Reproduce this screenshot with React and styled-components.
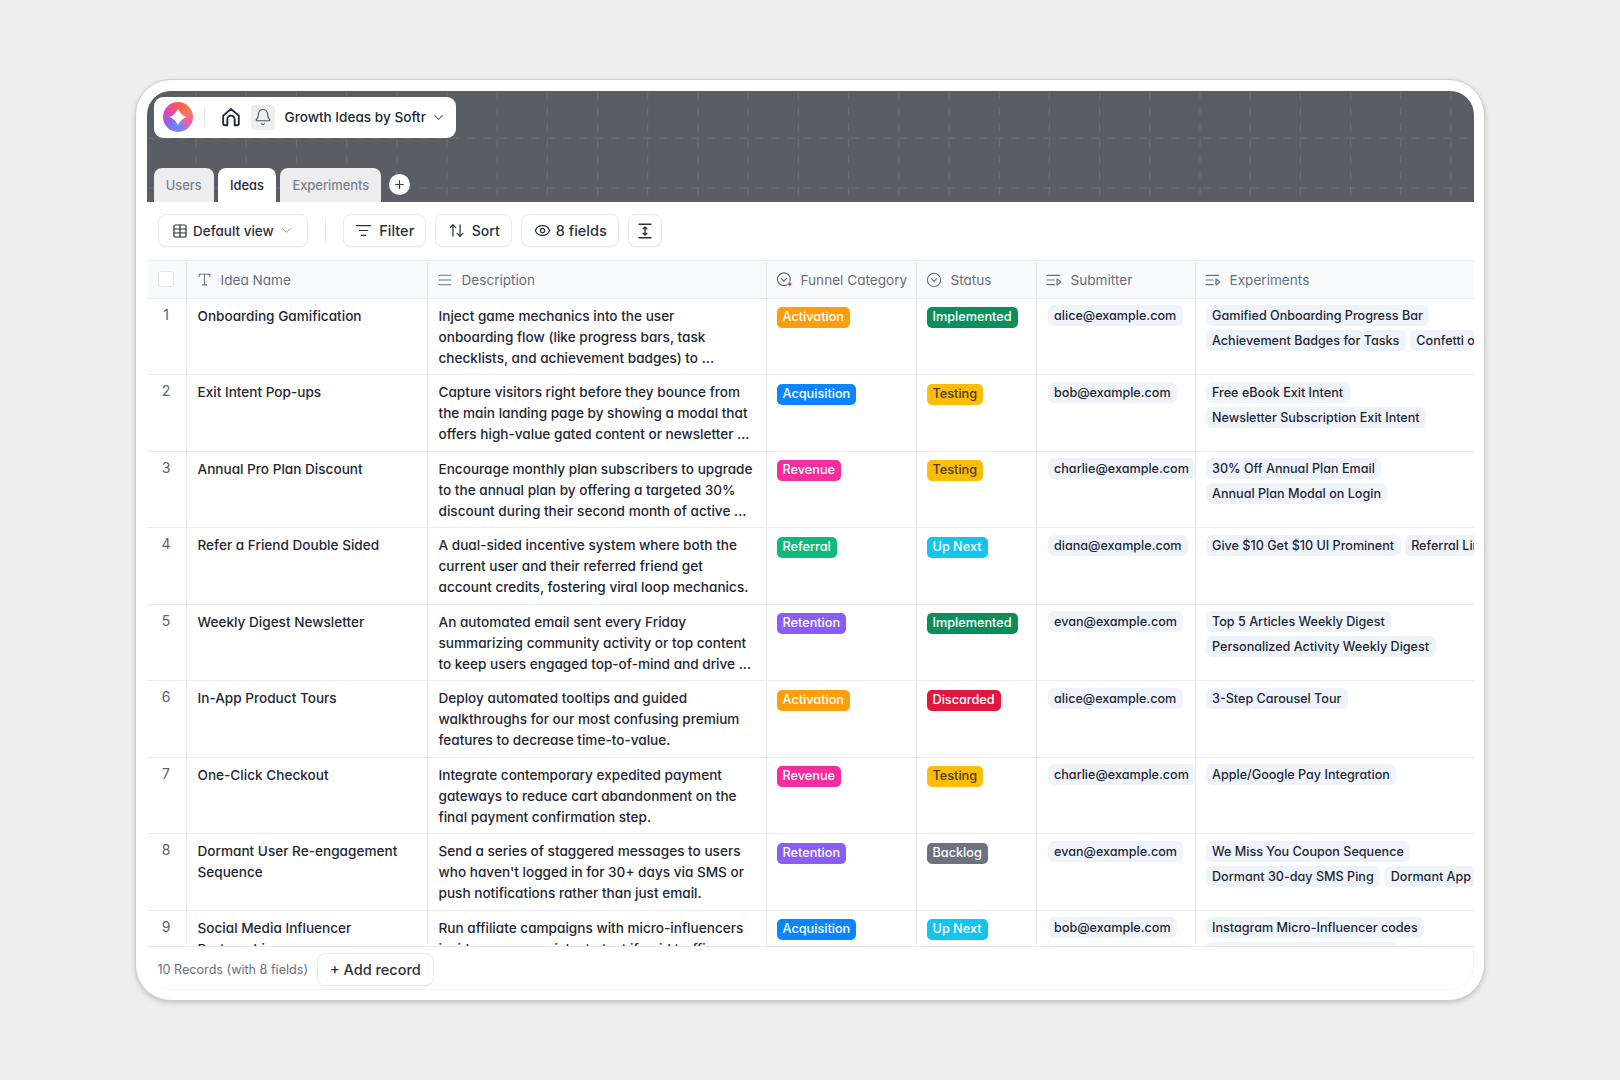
import React from "react";
import styled, { createGlobalStyle } from "styled-components";
import {
  ArrowUpDown,
  AlignJustify,
  Bell,
  ChevronDown,
  CircleChevronDown,
  Eye,
  ListFilter,
  Plus,
  Table,
} from "lucide-react";

const COLS = [40, 241, 339, 150, 120, 159, 278];

const TAG_COLORS = {
  Activation: "#ff9d0a",
  Acquisition: "#0a84ff",
  Revenue: "#f52d9e",
  Referral: "#0fb97c",
  Retention: "#8b5cf6",
  Implemented: "#0b8f5a",
  Testing: "#ffbd0a",
  "Up Next": "#14c4ee",
  Discarded: "#e0183f",
  Backlog: "#6b7280",
};

const records = [
  {
    name: ["Onboarding Gamification"],
    desc: [
      "Inject game mechanics into the user",
      "onboarding flow (like progress bars, task",
      "checklists, and achievement badges) to ...",
    ],
    funnel: "Activation",
    status: "Implemented",
    email: "alice@example.com",
    experiments: [
      ["Gamified Onboarding Progress Bar"],
      ["Achievement Badges for Tasks", "Confetti on Completion"],
    ],
  },
  {
    name: ["Exit Intent Pop-ups"],
    desc: [
      "Capture visitors right before they bounce from",
      "the main landing page by showing a modal that",
      "offers high-value gated content or newsletter ...",
    ],
    funnel: "Acquisition",
    status: "Testing",
    email: "bob@example.com",
    experiments: [["Free eBook Exit Intent"], ["Newsletter Subscription Exit Intent"]],
  },
  {
    name: ["Annual Pro Plan Discount"],
    desc: [
      "Encourage monthly plan subscribers to upgrade",
      "to the annual plan by offering a targeted 30%",
      "discount during their second month of active ...",
    ],
    funnel: "Revenue",
    status: "Testing",
    email: "charlie@example.com",
    experiments: [["30% Off Annual Plan Email"], ["Annual Plan Modal on Login"]],
  },
  {
    name: ["Refer a Friend Double Sided"],
    desc: [
      "A dual-sided incentive system where both the",
      "current user and their referred friend get",
      "account credits, fostering viral loop mechanics.",
    ],
    funnel: "Referral",
    status: "Up Next",
    email: "diana@example.com",
    experiments: [["Give $10 Get $10 UI Prominent", "Referral Link Share"]],
  },
  {
    name: ["Weekly Digest Newsletter"],
    desc: [
      "An automated email sent every Friday",
      "summarizing community activity or top content",
      "to keep users engaged top-of-mind and drive ...",
    ],
    funnel: "Retention",
    status: "Implemented",
    email: "evan@example.com",
    experiments: [["Top 5 Articles Weekly Digest"], ["Personalized Activity Weekly Digest"]],
  },
  {
    name: ["In-App Product Tours"],
    desc: [
      "Deploy automated tooltips and guided",
      "walkthroughs for our most confusing premium",
      "features to decrease time-to-value.",
    ],
    funnel: "Activation",
    status: "Discarded",
    email: "alice@example.com",
    experiments: [["3-Step Carousel Tour"]],
  },
  {
    name: ["One-Click Checkout"],
    desc: [
      "Integrate contemporary expedited payment",
      "gateways to reduce cart abandonment on the",
      "final payment confirmation step.",
    ],
    funnel: "Revenue",
    status: "Testing",
    email: "charlie@example.com",
    experiments: [["Apple/Google Pay Integration"]],
  },
  {
    name: ["Dormant User Re-engagement", "Sequence"],
    desc: [
      "Send a series of staggered messages to users",
      "who haven't logged in for 30+ days via SMS or",
      "push notifications rather than just email.",
    ],
    funnel: "Retention",
    status: "Backlog",
    email: "evan@example.com",
    experiments: [["We Miss You Coupon Sequence"], ["Dormant 30-day SMS Ping", "Dormant App Push"]],
  },
  {
    name: ["Social Media Influencer", "Partnerships"],
    desc: [
      "Run affiliate campaigns with micro-influencers",
      "inside your core niche to test if paid traffic",
      "converts better than our organic content.",
    ],
    funnel: "Acquisition",
    status: "Up Next",
    email: "bob@example.com",
    experiments: [["Instagram Micro-Influencer codes"], ["YouTube Creator Promo Code"]],
  },
];

const GlobalStyle = createGlobalStyle`
  html, body {
    margin: 0;
    padding: 0;
    background: #eeeeee;
  }
  body {
    font-family: Inter, "Noto Sans", sans-serif;
    font-feature-settings: "cv11" 1;
    color: #1f2733;
  }
`;

const Page = styled.div`
  width: 1620px;
  height: 1080px;
  display: flex;
  align-items: center;
  justify-content: center;
`;

const Frame = styled.div`
  box-sizing: border-box;
  width: 1350px;
  height: 922px;
  padding: 10.5px;
  background: #fff;
  border: 1.5px solid #cdcdcd;
  border-radius: 36px;
  box-shadow: 0 2px 5px rgba(0, 0, 0, 0.18);
`;

const Inner = styled.div`
  height: 100%;
  display: flex;
  flex-direction: column;
  border-radius: 24px;
  overflow: hidden;
`;

const Banner = styled.div`
  position: relative;
  box-sizing: border-box;
  height: 111px;
  flex: none;
  display: flex;
  flex-direction: column;
  justify-content: space-between;
  padding: 6px 7px 0;
  background: #5a5d63;
`;

const GridLines = styled.svg`
  position: absolute;
  inset: 0;
  width: 100%;
  height: 100%;
`;

const Brand = styled.div`
  position: relative;
  box-sizing: border-box;
  width: 302px;
  height: 41px;
  display: flex;
  align-items: center;
  padding-left: 9px;
  background: #fff;
  border-radius: 9px;
`;

const Logo = styled.div`
  width: 30px;
  height: 30px;
  flex: none;
  display: flex;
  align-items: center;
  justify-content: center;
  border-radius: 50%;
  background: conic-gradient(from 0deg, #f9594f, #ff7a4a 60deg, #f2609c 110deg, #5f8cff 180deg, #8f62ea 240deg, #e8479f 310deg, #f9594f);
`;

const BrandDivider = styled.span`
  width: 1px;
  height: 20px;
  margin: 0 15px 0 11px;
  background: #e6e7ea;
`;

const BellChip = styled.span`
  width: 24px;
  height: 25px;
  margin: 0 10px 0 9px;
  display: flex;
  align-items: center;
  justify-content: center;
  background: #eeeeef;
  border-radius: 4px;
  color: #4f5560;
`;

const BrandName = styled.span`
  font-size: 13.6px;
  font-weight: 500;
  color: #1f2733;
  white-space: nowrap;
`;

const BrandChevron = styled(ChevronDown)`
  margin-left: 5px;
  color: #5f6570;
`;

const Tabs = styled.div`
  position: relative;
  display: flex;
  align-items: center;
  gap: 4px;
`;

const Tab = styled.div`
  height: 34px;
  display: flex;
  align-items: center;
  padding: 1px 12.2px 0;
  box-sizing: border-box;
  font-size: 12.9px;
  font-weight: 500;
  border-radius: 8px 8px 0 0;
  background: ${(p) => (p.$active ? "#fff" : "#ededf0")};
  color: ${(p) => (p.$active ? "#1f2733" : "#7b808a")};
`;

const AddTab = styled.div`
  width: 21px;
  height: 21px;
  margin-left: 3.5px;
  display: flex;
  align-items: center;
  justify-content: center;
  border-radius: 50%;
  background: #fff;
  color: #3b4048;
`;

const Toolbar = styled.div`
  box-sizing: border-box;
  height: 58px;
  flex: none;
  display: flex;
  align-items: center;
  gap: 9px;
  padding: 0 11px;
  background: #fff;
`;

const ToolButton = styled.div`
  box-sizing: border-box;
  height: 33px;
  display: flex;
  align-items: center;
  gap: ${(p) => p.$gap || 7}px;
  padding: 0 ${(p) => p.$pad || 12}px;
  background: #fff;
  border: 1px solid #e6e8ec;
  border-radius: 8px;
  box-shadow: 0 1px 1px rgba(20, 30, 50, 0.03);
  font-size: ${(p) => p.$size || 14.5}px;
  font-weight: 500;
  color: #2a303b;
  white-space: nowrap;
`;

const ToolDivider = styled.span`
  width: 1px;
  height: 25px;
  margin: 0 8px;
  background: #e8e9ec;
`;

const Grid = styled.div`
  flex: 1;
  min-height: 0;
  display: flex;
  flex-direction: column;
  border-top: 1px solid #eceef1;
  border-bottom: 1px solid #e6e8eb;
`;

const HeadRow = styled.div`
  box-sizing: border-box;
  height: 38px;
  flex: none;
  display: flex;
  background: #f8fafc;
  border-bottom: 1px solid #e9ebef;
`;

const Body = styled.div`
  flex: 1;
  min-height: 0;
  overflow: hidden;
`;

const Row = styled.div`
  box-sizing: border-box;
  height: 76.5px;
  display: flex;
  border-bottom: 1px solid #e9ebef;
`;

const Cell = styled.div`
  box-sizing: border-box;
  width: ${(p) => p.$w}px;
  flex: none;
  overflow: hidden;
  border-right: 1px solid #e9ebef;
  padding: 6.5px 10px 0;

  &:last-child {
    border-right: none;
  }
`;

const HeadCell = styled(Cell)`
  display: flex;
  align-items: center;
  gap: 9px;
  padding: 1px 0 0 10px;
  font-size: 13.6px;
  font-weight: 400;
  color: #6a707c;
  white-space: nowrap;
`;

const HeadIcon = styled.span`
  width: 15px;
  flex: none;
  display: flex;
  align-items: center;
  justify-content: center;
  color: #6a707c;

  svg {
    flex: none;
  }
`;

const CheckCell = styled(Cell)`
  display: flex;
  align-items: center;
  justify-content: center;
  padding: 0;
`;

const Checkbox = styled.span`
  box-sizing: border-box;
  width: 16px;
  height: 16px;
  background: #fff;
  border: 1px solid #e3e5e9;
  border-radius: 3px;
`;

const RowNumber = styled(Cell)`
  padding: 5px 0 0;
  text-align: center;
  font-size: 14px;
  line-height: 21px;
  color: #5c6270;
`;

const TextCell = styled(Cell)`
  padding: 7px 0 0 11px;
`;

const TextLine = styled.div`
  font-size: 13.6px;
  font-weight: 450;
  line-height: 21px;
  color: #1f2733;
  white-space: nowrap;
`;

const Tag = styled.span`
  display: inline-block;
  height: 21px;
  margin-top: 1.5px;
  padding: 0 6px;
  border-radius: 5px;
  font-size: 12.7px;
  font-weight: 550;
  line-height: 20px;
  white-space: nowrap;
  background: ${(p) => TAG_COLORS[p.$name]};
  color: ${(p) => (p.$name === "Testing" ? "#4b3b0c" : "#fff")};
`;

const ChipRows = styled.div`
  display: flex;
  flex-direction: column;
  gap: 4px;
`;

const ChipRow = styled.div`
  display: flex;
  gap: 4px;
`;

const Chip = styled.span`
  flex: none;
  height: 21px;
  padding: 0 6.5px;
  border-radius: 6px;
  background: #eff4fc;
  font-size: 12.6px;
  font-weight: 500;
  line-height: 21px;
  color: #1f2733;
  white-space: nowrap;
`;

const EmailCell = styled(Cell)`
  padding-left: 11px;
  padding-right: 0;
`;

const Footer = styled.div`
  box-sizing: border-box;
  height: 43px;
  flex: none;
  display: flex;
  align-items: flex-start;
  gap: 9px;
  padding: 6.5px 0 0 11px;
  background: #fff;
  border-right: 1px solid #f3f4f6;
  border-bottom: 1px solid #f3f4f6;
  border-radius: 0 0 24px 24px;
`;

const RecordCount = styled.span`
  font-size: 12.6px;
  line-height: 33px;
  color: #6a707c;
`;

const HomeIcon = () => (
  <svg width="22" height="22" viewBox="0 0 24 24" fill="none" stroke="#1f2733" strokeWidth="2" strokeLinejoin="round" strokeLinecap="round">
    <path d="M3.5 10.5 12 3.2l8.5 7.3V19a2 2 0 0 1-2 2H16v-6.5a4 4 0 0 0-8 0V21H5.5a2 2 0 0 1-2-2z" />
  </svg>
);

const StarMark = () => (
  <svg width="20" height="20" viewBox="0 0 24 24" fill="#fff">
    <path d="M12 2Q15 9 22 12 15 15 12 22 9 15 2 12 9 9 12 2z" />
  </svg>
);

const RowHeightIcon = () => (
  <svg width="18" height="18" viewBox="0 0 24 24" fill="none" stroke="#2a303b" strokeWidth="1.8" strokeLinecap="round" strokeLinejoin="round">
    <path d="M4 3h16M4 21h16M12 7v10M9.500 9 12 6.500 14.500 9M9.500 15 12 17.500 14.500 15" />
  </svg>
);

const SerifT = () => (
  <svg width="15" height="15" viewBox="0 0 24 24" fill="none" stroke="#6a707c" strokeWidth="1.8" strokeLinecap="round" strokeLinejoin="round">
    <path d="M3.500 7V3.500h17V7M12 3.500V20.500M8.500 20.500h7" />
  </svg>
);

const FunnelIcon = () => (
  <svg width="18" height="18" viewBox="0 0 24 24" fill="none" style={{ marginLeft: 1 }}>
    <circle cx="10.500" cy="11" r="8.500" stroke="#6a707c" strokeWidth="1.600" />
    <path d="m7 10 3.500 3.500L14 10" stroke="#6a707c" strokeWidth="1.600" strokeLinecap="round" strokeLinejoin="round" />
    <path d="M18.500 13c.5 3 1.500 4 4.500 4.500-3 .5-4 1.500-4.500 4.500-.5-3-1.500-4-4.500-4.500 3-.5 4-1.500 4.500-4.500z" fill="#b32bc9" stroke="#fff" strokeWidth="0.600" />
  </svg>
);

const LinkedIcon = () => (
  <svg width="16" height="14" viewBox="0 0 24 21" fill="none" stroke="#6a707c" strokeWidth="1.700" strokeLinecap="round" strokeLinejoin="round">
    <path d="M1.500 3.500h19M1.500 10.500h11M1.500 17.500h11M16.500 9v9l6-4.500z" />
  </svg>
);

const COLUMNS = [
  { label: "Idea Name", icon: <SerifT /> },
  { label: "Description", icon: <AlignJustify size={16} strokeWidth={1.6} /> },
  { label: "Funnel Category", icon: <FunnelIcon /> },
  { label: "Status", icon: <CircleChevronDown size={16} strokeWidth={1.6} /> },
  { label: "Submitter", icon: <LinkedIcon /> },
  { label: "Experiments", icon: <LinkedIcon /> },
];

// dashed grid behind the banner, 50.2px pitch like the reference
const BannerGrid = () => {
  const xs = Array.from({ length: 27 }, (_, i) => 49 + i * 50.2);
  const ys = [47, 97];
  return (
    <GridLines aria-hidden="true">
      <g stroke="#fff" strokeOpacity="0.11" strokeDasharray="8 8">
        {xs.map((x) => (
          <line key={x} x1={x} y1="0" x2={x} y2="111" />
        ))}
        {ys.map((y) => (
          <line key={y} x1="0" y1={y} x2="1326" y2={y} />
        ))}
      </g>
    </GridLines>
  );
};

const RecordRow = ({ record, index }) => (
  <Row>
    <RowNumber $w={COLS[0]}>{index + 1}</RowNumber>
    <TextCell $w={COLS[1]}>
      {record.name.map((line) => (
        <TextLine key={line}>{line}</TextLine>
      ))}
    </TextCell>
    <TextCell $w={COLS[2]}>
      {record.desc.map((line) => (
        <TextLine key={line}>{line}</TextLine>
      ))}
    </TextCell>
    <Cell $w={COLS[3]}>
      <Tag $name={record.funnel}>{record.funnel}</Tag>
    </Cell>
    <Cell $w={COLS[4]}>
      <Tag $name={record.status}>{record.status}</Tag>
    </Cell>
    <EmailCell $w={COLS[5]}>
      <ChipRow>
        <Chip>{record.email}</Chip>
      </ChipRow>
    </EmailCell>
    <Cell $w={COLS[6]}>
      <ChipRows>
        {record.experiments.map((chips) => (
          <ChipRow key={chips[0]}>
            {chips.map((chip) => (
              <Chip key={chip}>{chip}</Chip>
            ))}
          </ChipRow>
        ))}
      </ChipRows>
    </Cell>
  </Row>
);

const App = () => (
  <Page>
    <GlobalStyle />
    <Frame>
      <Inner>
        <Banner>
          <BannerGrid />
          <Brand>
            <Logo>
              <StarMark />
            </Logo>
            <BrandDivider />
            <HomeIcon />
            <BellChip>
              <Bell size={18} strokeWidth={1.6} />
            </BellChip>
            <BrandName>Growth Ideas by Softr</BrandName>
            <BrandChevron size={15} strokeWidth={1.7} />
          </Brand>
          <Tabs>
            <Tab>Users</Tab>
            <Tab $active>Ideas</Tab>
            <Tab>Experiments</Tab>
            <AddTab>
              <Plus size={13} strokeWidth={2.2} />
            </AddTab>
          </Tabs>
        </Banner>

        <Toolbar>
          <ToolButton $size={13.5} $pad={13.5} $gap={5}>
            <Table size={16} strokeWidth={1.8} />
            Default view
            <ChevronDown size={15} strokeWidth={1.5} color="#8a8f99" />
          </ToolButton>
          <ToolDivider />
          <ToolButton $pad={11}>
            <ListFilter size={17} strokeWidth={1.7} />
            Filter
          </ToolButton>
          <ToolButton $size={14} $pad={11.5}>
            <ArrowUpDown size={17} strokeWidth={1.7} />
            Sort
          </ToolButton>
          <ToolButton $gap={5} $pad={11.5}>
            <Eye size={17} strokeWidth={1.7} />
            8 fields
          </ToolButton>
          <ToolButton $pad={7}>
            <RowHeightIcon />
          </ToolButton>
        </Toolbar>

        <Grid>
          <HeadRow>
            <CheckCell $w={COLS[0]}>
              <Checkbox />
            </CheckCell>
            {COLUMNS.map((col, i) => (
              <HeadCell key={col.label} $w={COLS[i + 1]}>
                <HeadIcon>{col.icon}</HeadIcon>
                {col.label}
              </HeadCell>
            ))}
          </HeadRow>
          <Body>
            {records.map((record, i) => (
              <RecordRow key={record.name[0]} record={record} index={i} />
            ))}
          </Body>
        </Grid>

        <Footer>
          <RecordCount>10 Records (with 8 fields)</RecordCount>
          <ToolButton $pad={12}>+ Add record</ToolButton>
        </Footer>
      </Inner>
    </Frame>
  </Page>
);

export default App;
